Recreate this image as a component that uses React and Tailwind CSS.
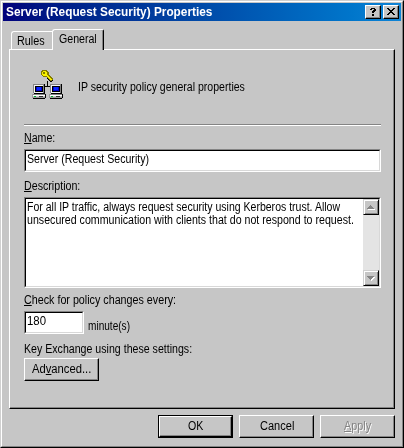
import { useLayoutEffect, useRef } from "react";

// Single-line label squeezed or stretched to the width of the bitmap system font.
function Label({ w, bold, className = "", children }) {
  const ref = useRef(null);
  useLayoutEffect(() => {
    const el = ref.current;
    el.style.transform = `scaleX(${w / el.offsetWidth})`;
  }, [w]);
  return (
    <div className={`h-[13px] shrink-0 ${className}`} style={{ width: w }}>
      <span
        ref={ref}
        className={`inline-block origin-left whitespace-pre leading-[15px] align-top ${bold ? "font-bold" : ""}`}
      >
        {children}
      </span>
    </div>
  );
}

const U = ({ children }) => <span className="underline decoration-1 underline-offset-[1px]">{children}</span>;

function Button({ className = "", children }) {
  return (
    <button
      className={`flex h-[23px] w-[75px] shrink-0 items-center justify-center border border-t-white border-l-white border-r-black border-b-black bg-[#c6c6c6] pb-[2px] shadow-[inset_-1px_-1px_0_#848484] ${className}`}
    >
      {children}
    </button>
  );
}

function Field({ className = "", children }) {
  return (
    <div className={`flex border border-t-[#848484] border-l-[#848484] border-r-white border-b-white ${className}`}>
      <div className="flex grow border border-t-black border-l-black border-r-[#d8d8d8] border-b-[#d8d8d8] bg-white">
        {children}
      </div>
    </div>
  );
}

function CaptionButton({ children }) {
  return (
    <button className="flex h-[14px] w-4 items-center justify-center border border-t-white border-l-white border-r-black border-b-black bg-[#c6c6c6] shadow-[inset_-1px_-1px_0_#848484]">
      {children}
    </button>
  );
}

function ScrollButton({ down }) {
  return (
    <div className="flex size-4 items-center justify-center border border-t-[#d0d0d0] border-l-[#d0d0d0] border-r-black border-b-black bg-[#c6c6c6] shadow-[inset_1px_1px_0_#fff,inset_-1px_-1px_0_#848484]">
      <svg width="10" height="8" viewBox="0 0 10 8" shapeRendering="crispEdges">
        {down ? (
          <>
            <path d="M2 3h7v1h-1v1h-1v1h-1v1h-1v-1h-1v-1h-1v-1h-1z" fill="#fff" />
            <path d="M1 2h7v1h-1v1h-1v1h-1v1h-1v-1h-1v-1h-1v-1h-1z" fill="#848484" />
          </>
        ) : (
          <>
            <path d="M2 6h7v1h-7z" fill="#fff" />
            <path d="M4 2h1v1h1v1h1v1h1v1h-7v-1h1v-1h1v-1h1z" fill="#848484" />
          </>
        )}
      </svg>
    </div>
  );
}

function Computer({ x }) {
  return (
    <g transform={`translate(${x} 0)`}>
      <path d="M1 15h11v9h-11z" fill="#848484" />
      <path d="M2 16h9v8h-9z" fill="#f4f4f4" />
      <path d="M12 15h1v9h-1zM2 24h11v1h-11z" fill="#000" />
      <path d="M3 17h8v6h-8z" fill="#000" />
      <path d="M4 18h6v4h-6z" fill="#0000c8" />
      <path d="M5 18h4v3h-4z" fill="#0a28ff" />
      <path d="M0 25h13v4h-13z" fill="#9c9c9c" />
      <path d="M1 25h12v1h-12z" fill="#848484" />
      <path d="M1 26h12v1h-12z" fill="#fff" />
      <path d="M1 27h12v1h-12z" fill="#c6c6c6" />
      <path d="M13 25h1v4h-1zM1 29h12v1h-12z" fill="#000" />
      <path d="M2 27h2v1h-2z" fill="#00b030" />
      <path d="M7 27h4v1h-4z" fill="#303030" />
    </g>
  );
}

function PolicyIcon() {
  return (
    <svg className="shrink-0" width="32" height="32" viewBox="0 0 32 32" shapeRendering="crispEdges">
      <path d="M15 12h1v5h-1zM13 17h5v1h-5z" fill="#000" />
      <path
        d="M10 1h5v1h1v1h1v3h1v1h1v1h1v1h1v2h-1v1h-2v-1h-1v-1h-1v-1h-1v-1h-4v-1h-1v-1h-1v-4h1z"
        fill="#847c00"
      />
      <path
        d="M10 2h4v1h1v3h1v1h1v1h1v1h1v1h1v1h-2v-1h-1v-1h-1v-1h-1v-1h-4v-1h-1v-3h1z"
        fill="#f8f000"
      />
      <path d="M11 3h2v2h-2z" fill="#847c00" />
      <path d="M15 9h1v1h1v1h1v1h2v-1h1v1h-1v1h-2v-1h-1v-1h-1v-1h-1z" fill="#000" />
      <Computer x={0} />
      <Computer x={17} />
    </svg>
  );
}

export default function App() {
  return (
    <div className="flex h-[448px] w-[404px] flex-col overflow-hidden border border-t-[#d0d0d0] border-l-[#d0d0d0] border-r-black border-b-black bg-[#c6c6c6] font-['Liberation_Sans',Arial,sans-serif] text-[12px] leading-[13px] text-black">
      <div className="flex grow flex-col border border-t-white border-l-white border-r-[#848484] border-b-[#848484] p-px">
        <div className="flex h-[18px] shrink-0 items-center bg-linear-to-r from-[#00007b] to-[#1084d6] pr-[2px] pl-[3px] text-white">
          <Label w={206} bold className="-mt-px">Server (Request Security) Properties</Label>
          <div className="ml-auto flex gap-[2px] text-black">
            <CaptionButton>
              <svg width="10" height="10" viewBox="0 0 10 10" shapeRendering="crispEdges">
                <path d="M3 1h4v1h1v2h-1v1h-1v1h-2v-2h1v-1h1v-1h-2v1h-2v-1h1zM4 7h2v2h-2z" />
              </svg>
            </CaptionButton>
            <CaptionButton>
              <svg width="10" height="10" viewBox="0 0 10 10" shapeRendering="crispEdges">
                <path d="M1 1h2v1h1v1h2v-1h1v-1h2v1h-1v1h-1v1h-1v1h1v1h1v1h1v1h-2v-1h-1v-1h-2v1h-1v1h-2v-1h1v-1h1v-1h1v-1h-1v-1h-1v-1h-1z" />
              </svg>
            </CaptionButton>
          </div>
        </div>

        <div className="z-10 mt-2 -mb-px ml-2 flex h-[21px] shrink-0 items-end">
          <div className="mb-px h-[18px] w-[41px] rounded-tl-[3px] border-t border-l border-white pt-[2px] pl-[5px]">
            <Label w={28}>Rules</Label>
          </div>
          <div className="h-[21px] w-[52px] rounded-tl-[3px] rounded-tr-[2px] border-t border-r border-l border-t-white border-r-black border-l-white bg-[#c6c6c6] pt-[2px] pl-[6px] shadow-[inset_-1px_0_0_#848484]">
            <Label w={38}>General</Label>
          </div>
        </div>

        <div className="ml-[6px] flex h-[360px] w-[386px] shrink-0 flex-col border border-t-white border-r-black border-b-black border-l-white pl-[14px] shadow-[inset_-1px_-1px_0_#848484]">
          <div className="mt-[19px] flex h-8 pl-2">
            <PolicyIcon />
            <Label w={167} className="mt-[11px] ml-[14px]">IP security policy general properties</Label>
          </div>
          <div className="mt-[23px] h-[2px] w-[357px] shrink-0 border-t border-b border-t-[#848484] border-b-white" />
          <Label w={31} className="mt-[5px]"><U>N</U>ame:</Label>
          <Field className="mt-[5px] h-[23px] w-[357px] shrink-0">
            <Label w={122} className="mt-px ml-px">Server (Request Security)</Label>
          </Field>
          <Label w={56} className="mt-[7px]"><U>D</U>escription:</Label>
          <Field className="mt-[5px] h-[91px] w-[357px] shrink-0">
            <div className="mt-px ml-px grow">
              <Label w={313}>For all IP traffic, always request security using Kerberos trust. Allow</Label>
              <Label w={327}>unsecured communication with clients that do not respond to request.</Label>
            </div>
            <div className="flex w-4 flex-col justify-between bg-[#e4e4e4]">
              <ScrollButton />
              <ScrollButton down />
            </div>
          </Field>
          <Label w={152} className="mt-[5px]"><U>C</U>heck for policy changes every:</Label>
          <div className="mt-[5px] flex h-[23px] shrink-0">
            <Field className="w-[60px]">
              <Label w={19} className="mt-px ml-px">180</Label>
            </Field>
            <Label w={42} className="mt-2 ml-1">minute(s)</Label>
          </div>
          <Label w={168} className="mt-[8px]">Key Exchange using these settings:</Label>
          <Button className="mt-[3px]">
            <Label w={59}>Ad<U>v</U>anced...</Label>
          </Button>
        </div>

        <div className="mt-[6px] ml-[155px] flex gap-[6px]">
          <button className="h-[23px] w-[75px] border border-black">
            <div className="flex h-full items-center justify-center border border-t-white border-l-white border-r-black border-b-black pb-[2px] shadow-[inset_-1px_-1px_0_#848484]">
              <Label w={15}>OK</Label>
            </div>
          </button>
          <Button><Label w={34}>Cancel</Label></Button>
          <Button className="text-[#848484] [text-shadow:1px_1px_0_#fff]"><Label w={27}><U>A</U>pply</Label></Button>
        </div>
      </div>
    </div>
  );
}
